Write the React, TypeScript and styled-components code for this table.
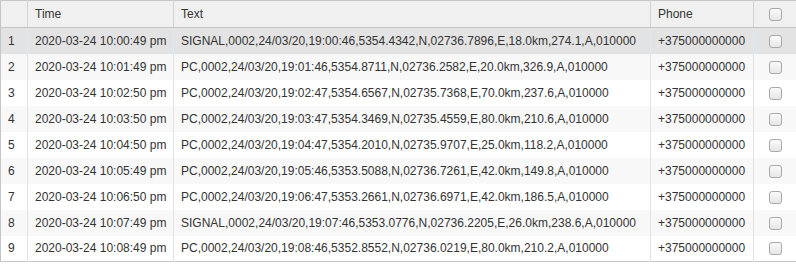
import React, { useState } from 'react';
import styled, { createGlobalStyle } from 'styled-components';

interface Message {
  time: string;
  text: string;
  phone: string;
}

const rows: Message[] = [
  { time: '2020-03-24 10:00:49 pm', text: 'SIGNAL,0002,24/03/20,19:00:46,5354.4342,N,02736.7896,E,18.0km,274.1,A,010000', phone: '+375000000000' },
  { time: '2020-03-24 10:01:49 pm', text: 'PC,0002,24/03/20,19:01:46,5354.8711,N,02736.2582,E,20.0km,326.9,A,010000', phone: '+375000000000' },
  { time: '2020-03-24 10:02:50 pm', text: 'PC,0002,24/03/20,19:02:47,5354.6567,N,02735.7368,E,70.0km,237.6,A,010000', phone: '+375000000000' },
  { time: '2020-03-24 10:03:50 pm', text: 'PC,0002,24/03/20,19:03:47,5354.3469,N,02735.4559,E,80.0km,210.6,A,010000', phone: '+375000000000' },
  { time: '2020-03-24 10:04:50 pm', text: 'PC,0002,24/03/20,19:04:47,5354.2010,N,02735.9707,E,25.0km,118.2,A,010000', phone: '+375000000000' },
  { time: '2020-03-24 10:05:49 pm', text: 'PC,0002,24/03/20,19:05:46,5353.5088,N,02736.7261,E,42.0km,149.8,A,010000', phone: '+375000000000' },
  { time: '2020-03-24 10:06:50 pm', text: 'PC,0002,24/03/20,19:06:47,5353.2661,N,02736.6971,E,42.0km,186.5,A,010000', phone: '+375000000000' },
  { time: '2020-03-24 10:07:49 pm', text: 'SIGNAL,0002,24/03/20,19:07:46,5353.0776,N,02736.2205,E,26.0km,238.6,A,010000', phone: '+375000000000' },
  { time: '2020-03-24 10:08:49 pm', text: 'PC,0002,24/03/20,19:08:46,5352.8552,N,02736.0219,E,80.0km,210.2,A,010000', phone: '+375000000000' },
];

const GlobalStyle = createGlobalStyle`
  body {
    margin: 0;
    background: #fff;
    font-family: "Liberation Sans", Arial, sans-serif;
  }
`;

const Grid = styled.table`
  width: 796px;
  border-collapse: collapse;
  table-layout: fixed;
  border: 1px solid #c5c5c5;
  font-size: 12px;
  color: #333;
`;

const Col = styled.col<{ $w: number }>`
  width: ${(p) => p.$w}px;
`;

const HeadCell = styled.th<{ $center?: boolean }>`
  height: 26px;
  padding: 0 7px;
  background: #f0f0f0;
  border-bottom: 1px solid #c5c5c5;
  border-left: 1px solid #d3d3d3;
  font-weight: normal;
  text-align: ${(p) => (p.$center ? 'center' : 'left')};
  color: #333;
  &:first-child {
    border-left: none;
  }
`;

const Row = styled.tr<{ $selected: boolean; $alt: boolean }>`
  height: 26px;
  background: ${(p) => (p.$selected ? '#e3e3e3' : p.$alt ? '#f8f8f8' : '#fff')};

  td {
    border-left: 1px solid ${(p) => (p.$selected ? '#d6ebf9' : '#e2e2e2')};
  }
  td:first-child {
    border-left: none;
  }
`;

const Cell = styled.td<{ $center?: boolean }>`
  padding: 0 7px;
  white-space: nowrap;
  overflow: hidden;
  text-align: ${(p) => (p.$center ? 'center' : 'left')};
`;

const Check = styled.span`
  display: inline-block;
  width: 13px;
  height: 13px;
  box-sizing: border-box;
  border: 1px solid #a9a9a9;
  border-radius: 3px;
  background: linear-gradient(#fafafa, #e6e6e6);
  vertical-align: middle;
`;

const App: React.FC = () => {
  const [selected] = useState(0);

  return (
    <>
      <GlobalStyle />
      <Grid>
        <colgroup>
          <Col $w={27} />
          <Col $w={146} />
          <Col $w={477} />
          <Col $w={103} />
          <Col $w={43} />
        </colgroup>
        <thead>
          <tr>
            <HeadCell />
            <HeadCell>Time</HeadCell>
            <HeadCell>Text</HeadCell>
            <HeadCell>Phone</HeadCell>
            <HeadCell $center>
              <Check />
            </HeadCell>
          </tr>
        </thead>
        <tbody>
          {rows.map((r, i) => (
            <Row key={i} $selected={i === selected} $alt={i % 2 === 1}>
              <Cell>{i + 1}</Cell>
              <Cell>{r.time}</Cell>
              <Cell>{r.text}</Cell>
              <Cell>{r.phone}</Cell>
              <Cell $center>
                <Check />
              </Cell>
            </Row>
          ))}
        </tbody>
      </Grid>
    </>
  );
};

export default App;
